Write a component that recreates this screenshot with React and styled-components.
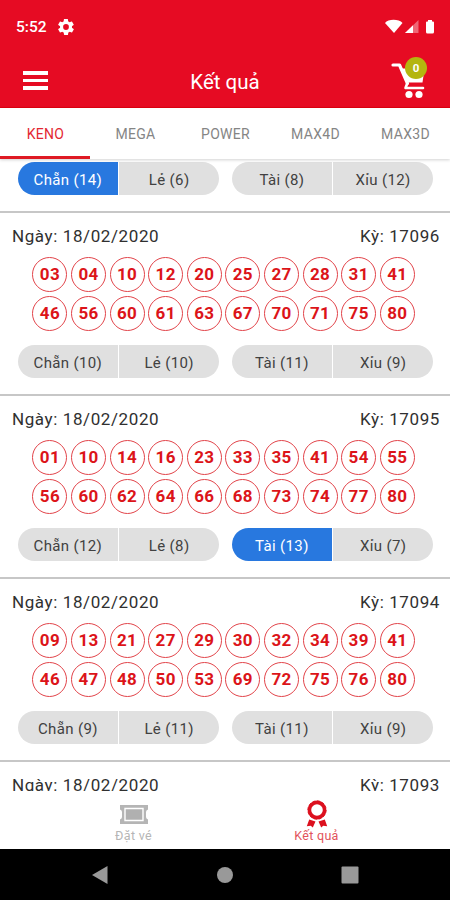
import React from "react";
import styled, { createGlobalStyle } from "styled-components";

const Global = createGlobalStyle`
  * { box-sizing: border-box; }
  body { margin: 0; background: #fff; font-family: Roboto, "Noto Sans", sans-serif; }
`;

const Screen = styled.div`
  width: 450px;
  height: 900px;
  display: flex;
  flex-direction: column;
  overflow: hidden;
  background: #fff;
`;

const Header = styled.header`
  flex: none;
  height: 108px;
  background: #e60b23;
  color: #fff;
  border-bottom: 1px solid #e00010;
`;

const StatusBar = styled.div`
  height: 54px;
  display: flex;
  align-items: center;
  padding: 0 15px 0 16px;
`;

const Clock = styled.span`
  width: 42px;
  font-size: 15.5px;
  font-weight: 500;
`;

const StatusIcons = styled.div`
  margin-left: auto;
  display: flex;
  align-items: center;
`;

const AppBar = styled.div`
  height: 53px;
  display: grid;
  grid-template-columns: 70px 1fr 70px;
  align-items: center;
`;

const Menu = styled.div`
  margin-left: 23px;
  width: 25px;
  display: grid;
  gap: 4px;
`;

const MenuLine = styled.span`
  height: 3.7px;
  background: #fff;
`;

const Title = styled.h1`
  margin: 2px 0 0;
  text-align: center;
  font-size: 20.5px;
  font-weight: 400;
`;

const Cart = styled.div`
  position: relative;
  width: 46px;
  height: 46px;
  margin-bottom: 7px;
`;

const Badge = styled.span`
  position: absolute;
  left: 25px;
  top: 3px;
  width: 22px;
  height: 22px;
  border-radius: 50%;
  background: #b4b50f;
  font-size: 11.5px;
  font-weight: 700;
  line-height: 23px;
  text-align: center;
`;

const Tabs = styled.nav`
  flex: none;
  height: 51px;
  display: grid;
  grid-template-columns: repeat(5, 90px);
  position: relative;
  background: #fff;
  box-shadow: 0 1px 3px rgba(0, 0, 0, 0.18);
  z-index: 1;
`;

const Tab = styled.div`
  display: flex;
  align-items: center;
  justify-content: center;
  padding: ${(p) => (p.$active ? "4px" : "1px")} 0 0 1px;
  font-size: 14px;
  letter-spacing: 0.3px;
  color: ${(p) => (p.$active ? "#e32832" : "#858585")};
  border-bottom: ${(p) => (p.$active ? "3px solid #df1a24" : "0")};
`;

const List = styled.main`
  flex: 1;
  min-height: 0;
  overflow: hidden;
`;

const Draw = styled.section`
  height: ${(p) => (p.$partial ? "54px" : "183px")};
  padding-top: ${(p) => (p.$partial ? "3px" : "12px")};
  border-bottom: 2px solid #c7c7c7;
`;

const DrawHead = styled.div`
  height: 22px;
  padding: 0 10px 0 12px;
  display: flex;
  align-items: center;
  justify-content: space-between;
  font-size: 17px;
  letter-spacing: 0.6px;
  color: #303030;
`;

const Balls = styled.div`
  display: grid;
  grid-template-columns: repeat(10, 35px);
  column-gap: 3.6px;
  row-gap: 4px;
  margin: 9.5px 0 14.5px 32.4px;
`;

const Ball = styled.span`
  height: 35px;
  display: flex;
  align-items: center;
  justify-content: center;
  padding-bottom: 1px;
  border: 1px solid #e2444a;
  border-radius: 50%;
  color: #dc1419;
  font-size: 17px;
  font-weight: 700;
  letter-spacing: 0.3px;
`;

const Pills = styled.div`
  padding: 0 17px 0 18px;
  display: flex;
  justify-content: space-between;
`;

const PillPair = styled.div`
  width: 201px;
  height: 33px;
  display: grid;
  grid-template-columns: 1fr 1fr;
  gap: 1.5px;
  border-radius: 17px;
  overflow: hidden;
`;

const Pill = styled.div`
  display: flex;
  align-items: center;
  justify-content: center;
  padding-top: 2px;
  background: ${(p) => (p.$active ? "#2878df" : "#e0e0e0")};
  color: ${(p) => (p.$active ? "#fff" : "#414141")};
  font-size: 15px;
  letter-spacing: 0.35px;
`;

const BottomNav = styled.nav`
  flex: none;
  height: 58px;
  display: grid;
  grid-template-columns: 1fr 1fr;
  padding: 0 42px;
  background: #fff;
`;

const NavItem = styled.div`
  display: flex;
  flex-direction: column;
  align-items: center;
  color: ${(p) => (p.$active ? "#e2535c" : "#b5b5b5")};
  font-size: 12.5px;
  line-height: 15px;
  letter-spacing: 0.3px;
`;

const NavIcon = styled.div`
  height: 37px;
  display: flex;
  align-items: flex-end;
  padding-bottom: ${(p) => p.$lift}px;
`;

const SystemBar = styled.footer`
  flex: none;
  height: 51px;
  display: grid;
  grid-template-columns: repeat(3, 125px);
  justify-content: center;
  align-items: center;
  justify-items: center;
  background: #000;
`;

const TABS = ["KENO", "MEGA", "POWER", "MAX4D", "MAX3D"];

const DRAWS = [
  {
    id: "17096",
    balls: "03 04 10 12 20 25 27 28 31 41 46 56 60 61 63 67 70 71 75 80",
    counts: [10, 10, 11, 9],
  },
  {
    id: "17095",
    balls: "01 10 14 16 23 33 35 41 54 55 56 60 62 64 66 68 73 74 77 80",
    counts: [12, 8, 13, 7],
    active: 2,
  },
  {
    id: "17094",
    balls: "09 13 21 27 29 30 32 34 39 41 46 47 48 50 53 69 72 75 76 80",
    counts: [9, 11, 11, 9],
  },
];

function Stats({ counts, active }) {
  const labels = ["Chẵn", "Lẻ", "Tài", "Xỉu"];
  return (
    <Pills>
      {[0, 2].map((start) => (
        <PillPair key={start}>
          {[start, start + 1].map((i) => (
            <Pill key={i} $active={active === i}>
              {labels[i]} ({counts[i]})
            </Pill>
          ))}
        </PillPair>
      ))}
    </Pills>
  );
}

function Heading({ id }) {
  return (
    <DrawHead>
      <span>Ngày: 18/02/2020</span>
      <span>Kỳ: {id}</span>
    </DrawHead>
  );
}

function Gear() {
  return (
    <svg width="16" height="16" viewBox="2 2 20 20" fill="#fff">
      <path d="M19.400 13c.1-.3.1-.6.1-1s0-.7-.1-1l2.100-1.600c.2-.2.2-.4.1-.6l-2-3.500c-.1-.2-.4-.3-.6-.2l-2.500 1c-.5-.4-1.100-.7-1.700-1l-.4-2.600c0-.3-.2-.5-.5-.5h-4c-.2 0-.4.200-.5.400l-.4 2.700c-.6.200-1.100.600-1.700 1l-2.400-1c-.3-.1-.5 0-.6.200l-2 3.500c-.1.200-.1.400.1.600L4.600 11a8 8 0 0 0 0 2l-2.200 1.600c-.2.200-.2.400-.1.600l2 3.500c.1.200.400.300.600.200l2.500-1c.500.400 1.100.700 1.700 1l.400 2.600c0 .3.200.5.500.5h4c.2 0 .5-.2.5-.4l.4-2.700c.6-.2 1.100-.6 1.700-1l2.500 1c.2.100.500 0 .6-.2l2-3.500c.1-.2.1-.4-.1-.6zM12 15.600a3.600 3.600 0 1 1 0-7.200 3.600 3.600 0 0 1 0 7.200z" />
    </svg>
  );
}

function StatusGlyphs() {
  return (
    <svg width="50" height="16" viewBox="0 0 50 16" fill="#fff">
      <path d="M0 4C3-.4 14-.4 17.500 4L9 14z" />
      <path d="M20 14 33.500 1v13z" opacity=".38" />
      <path d="M20 14 28 6.300V14z" />
      <path d="M43 1h4v1.500h1q1 0 1 1V13q0 1.500-1.500 1.500h-5Q41 14.500 41 13V3.500q0-1 1-1h1z" />
    </svg>
  );
}

function CartIcon() {
  return (
    <svg width="46" height="46" viewBox="0 0 46 46">
      <g fill="none" stroke="#fff" strokeLinecap="round" strokeLinejoin="round">
        <path d="M13 11h6.500l8 18.500" strokeWidth="3.200" />
        <path d="M27 30 25.500 34H43" strokeWidth="2.600" />
      </g>
      <path d="M21 14.500h23.500L42.500 28.500H27z" fill="#fff" />
      <circle cx="29" cy="40.500" r="3.600" fill="#fff" />
      <circle cx="39" cy="40.500" r="3.600" fill="#fff" />
    </svg>
  );
}

function TicketIcon() {
  return (
    <svg width="28" height="19" viewBox="0 0 28 19">
      <path
        d="M0 0h28v4.500q-2 .8-2 2.500v5q0 1.700 2 2.500V19H0v-4.500q2-.8 2-2.500V7q0-1.700-2-2.500z"
        fill="#b5b5b5"
      />
      <path d="M5 3.500h18v12H5z" fill="#b0b0b0" stroke="#fff" strokeWidth="1.400" />
    </svg>
  );
}

function RibbonIcon() {
  return (
    <svg width="22" height="28" viewBox="0 0 22 28">
      <circle cx="11" cy="10" r="7.600" fill="none" stroke="#dc101e" strokeWidth="3.600" />
      <circle cx="11" cy="10" r="9.200" fill="none" stroke="#dc101e" strokeWidth=".8" strokeDasharray="3 1.800" />
      <path d="m3.200 19.500 6.300 2-2.700 6-2-1.800-4 .6z" fill="#dc101e" />
      <path d="m18.800 19.500-6.300 2 2.700 6 2-1.800 4 .6z" fill="#dc101e" />
    </svg>
  );
}

export default function App() {
  return (
    <>
      <Global />
      <Screen>
        <Header>
          <StatusBar>
            <Clock>5:52</Clock>
            <Gear />
            <StatusIcons>
              <StatusGlyphs />
            </StatusIcons>
          </StatusBar>
          <AppBar>
            <Menu>
              <MenuLine />
              <MenuLine />
              <MenuLine />
            </Menu>
            <Title>Kết quả</Title>
            <Cart>
              <CartIcon />
              <Badge>0</Badge>
            </Cart>
          </AppBar>
        </Header>
        <Tabs>
          {TABS.map((t, i) => (
            <Tab key={t} $active={i === 0}>
              {t}
            </Tab>
          ))}
        </Tabs>
        <List>
          <Draw $partial>
            <Stats counts={[14, 6, 8, 12]} active={0} />
          </Draw>
          {DRAWS.map((d) => (
            <Draw key={d.id}>
              <Heading id={d.id} />
              <Balls>
                {d.balls.split(" ").map((n) => (
                  <Ball key={n}>{n}</Ball>
                ))}
              </Balls>
              <Stats counts={d.counts} active={d.active} />
            </Draw>
          ))}
          <Draw>
            <Heading id="17093" />
          </Draw>
        </List>
        <BottomNav>
          <NavItem>
            <NavIcon $lift={4}>
              <TicketIcon />
            </NavIcon>
            Đặt vé
          </NavItem>
          <NavItem $active>
            <NavIcon $lift={0}>
              <RibbonIcon />
            </NavIcon>
            Kết quả
          </NavItem>
        </BottomNav>
        <SystemBar>
          <svg width="18" height="20" viewBox="0 0 18 20">
            <path d="M1 10 16.500 1v18z" fill="#999" />
          </svg>
          <svg width="18" height="18" viewBox="0 0 18 18">
            <circle cx="9" cy="9" r="8" fill="#999" />
          </svg>
          <svg width="18" height="18" viewBox="0 0 18 18">
            <rect x=".5" y=".5" width="17" height="17" rx="1" fill="#999" />
          </svg>
        </SystemBar>
      </Screen>
    </>
  );
}
